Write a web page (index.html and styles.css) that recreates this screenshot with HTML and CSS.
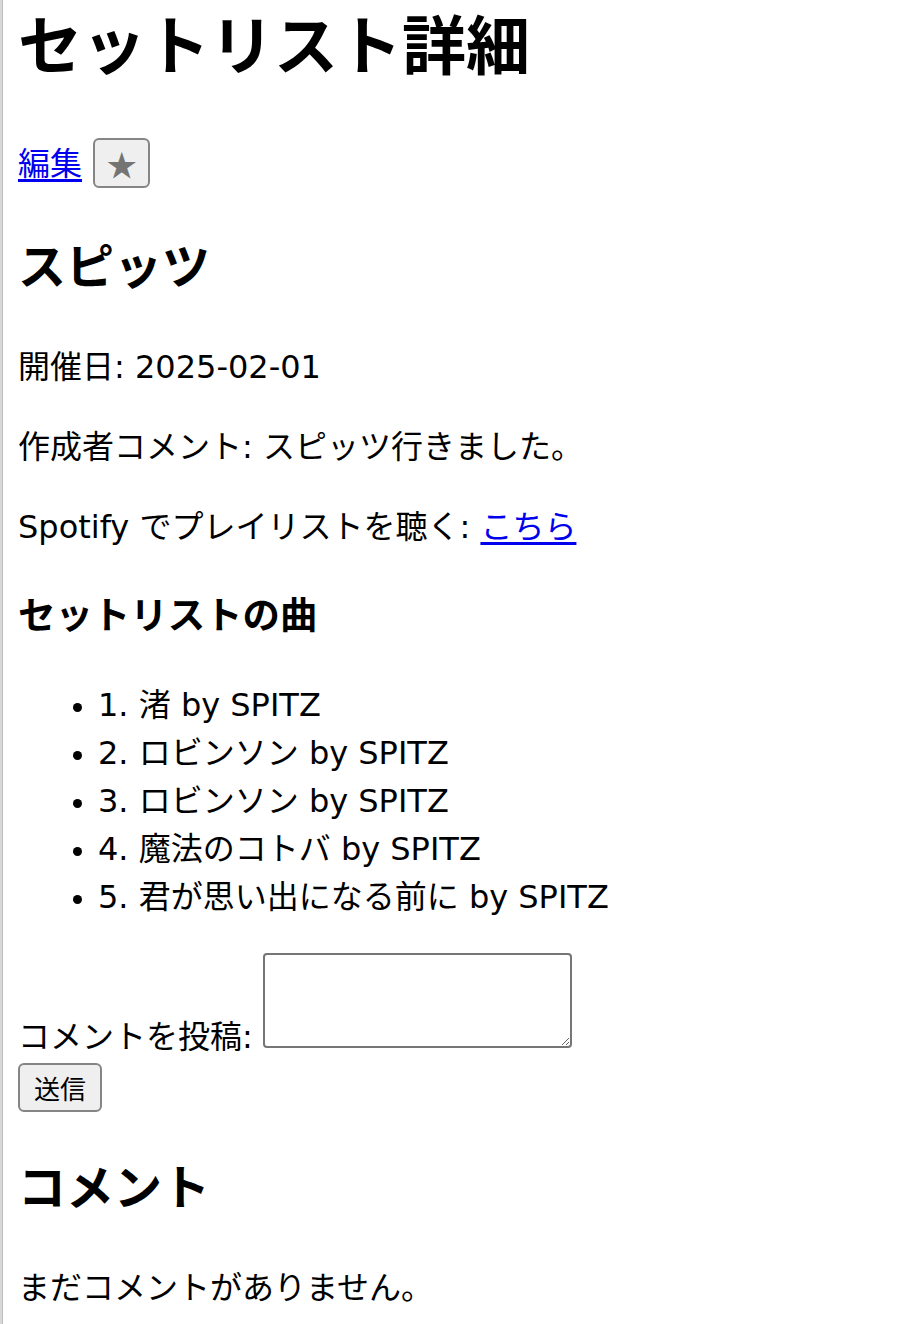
FILE: index.html
```html
<!DOCTYPE html>
<html lang="ja">
<head>
<meta charset="utf-8">
<title>セットリスト詳細</title>
<link rel="stylesheet" href="styles.css">
</head>
<body>
<h1 class="title">セットリスト詳細</h1>
<div class="actions"><a href="#" class="link">編集</a> <button class="btn btn-star" type="button">★</button></div>
<h2 class="artist">スピッツ</h2>
<p class="info">開催日: 2025-02-01</p>
<p class="info">作成者コメント: スピッツ行きました。</p>
<p class="info">Spotify でプレイリストを聴く: <a href="#" class="link">こちら</a></p>
<h3 class="songs-title">セットリストの曲</h3>
<ul class="songs">
<li>1. 渚 by SPITZ</li>
<li>2. ロビンソン by SPITZ</li>
<li>3. ロビンソン by SPITZ</li>
<li>4. 魔法のコトバ by SPITZ</li>
<li>5. 君が思い出になる前に by SPITZ</li>
</ul>
<form class="comment-form">
<label class="comment-label">コメントを投稿: <textarea class="comment-input"></textarea></label><br>
<button class="btn btn-send" type="button">送信</button>
</form>
<h2 class="comments-title">コメント</h2>
<p class="info">まだコメントがありません。</p>
</body>
</html>
```
FILE: styles.css
```css
html {
  background: linear-gradient(to right, #d8d8d8 0, #d8d8d8 2px, #bdbdbd 2px, #bdbdbd 3px, #ffffff 3px);
}
body {
  margin: 0 16px 16px 18px;
  font-family: "DejaVu Sans", "Noto Sans CJK JP", sans-serif;
  font-size: 32px;
  line-height: 1.5;
  color: #000;
}
.title {
  font-size: 64px;
  margin: -1px 0 42px;
  line-height: 96px;
}
.actions {
  line-height: 54px;
  height: 54px;
  margin: 0;
}
.link {
  color: #0000ee;
  text-decoration: underline;
  text-underline-offset: 4px;
}
.btn {
  font-family: "Noto Sans CJK JP", sans-serif;
  font-size: 26px;
  line-height: 1;
  height: 49px;
  box-sizing: border-box;
  background: #efefef;
  border: 2px solid #858585;
  border-radius: 6px;
  padding: 0;
  color: #000;
  vertical-align: baseline;
}
.btn-star {
  width: 57px;
  height: 50px;
  color: #747474;
  font-size: 30px;
  margin-left: 1px;
  vertical-align: -1px;
}
.btn-send {
  width: 84px;
  margin-top: 2px;
}
.artist {
  font-size: 48px;
  line-height: 72px;
  margin: 40px 0;
}
.info {
  margin: 32px 0;
}
.songs-title {
  font-size: 37.44px;
  line-height: 56px;
  margin: 37px 0;
}
.songs {
  margin: 32px 0;
  padding-left: 80px;
}
.songs li::marker {
  font-size: 30px;
}
.comment-form {
  margin: 0;
}
.comment-input {
  width: 309px;
  height: 95px;
  box-sizing: border-box;
  border: 2px solid #767676;
  border-radius: 4px;
  margin: 0;
  padding: 4px;
  font-size: 26px;
  vertical-align: baseline;
  resize: both;
}
.comments-title {
  font-size: 48px;
  line-height: 72px;
  margin: 40px 0;
}
```
